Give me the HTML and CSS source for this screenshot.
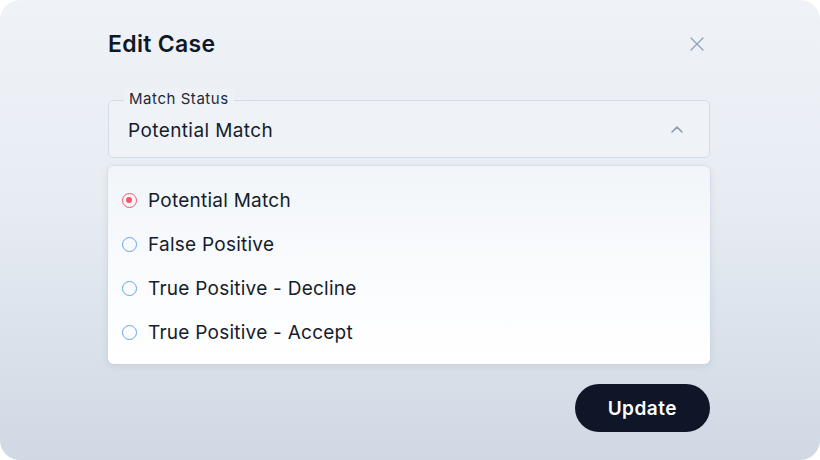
FILE: index.html
```html
<!DOCTYPE html>
<html lang="en">
<head>
<meta charset="utf-8">
<title>Edit Case</title>
<link rel="stylesheet" href="styles.css">
</head>
<body>
<div class="card">
  <div class="header">
    <h1 class="title">Edit Case</h1>
    <svg class="close" width="14" height="14" viewBox="0 0 14 14" fill="none" stroke="#94a3b8" stroke-width="1.4" stroke-linecap="round"><path d="M1 1L13 13M13 1L1 13"/></svg>
  </div>
  <div class="field">
    <span class="label">Match Status</span>
    <span class="value">Potential Match</span>
    <svg class="chev" width="12" height="7" viewBox="0 0 12 7" fill="none" stroke="#8a9ab0" stroke-width="1.6" stroke-linecap="round" stroke-linejoin="round"><path d="M1 6L6 1.2L11 6"/></svg>
  </div>
  <ul class="menu">
    <li class="item"><span class="radio selected"></span>Potential Match</li>
    <li class="item"><span class="radio"></span>False Positive</li>
    <li class="item"><span class="radio"></span>True Positive - Decline</li>
    <li class="item"><span class="radio"></span>True Positive - Accept</li>
  </ul>
  <button class="btn">Update</button>
</div>
</body>
</html>
```
FILE: styles.css
```css
html, body {
  margin: 0;
  padding: 0;
  background: #ffffff;
}
body {
  font-family: Inter, "Noto Sans", sans-serif;
  color: #111827;
}
.card {
  width: 820px;
  height: 460px;
  box-sizing: border-box;
  border-radius: 20px;
  background: linear-gradient(180deg, #eff3f8 0%, #e7ecf3 45%, #cfd8e3 100%);
  padding: 28px 110px 0 108px;
  display: flex;
  flex-direction: column;
}
.header {
  height: 32px;
  display: flex;
  align-items: center;
  justify-content: space-between;
}
.title {
  margin: 0;
  font-size: 23px;
  line-height: 32px;
  font-weight: 600;
  color: #101828;
  letter-spacing: 0.3px;
}
.close {
  margin-right: 6px;
  display: block;
}
.field {
  margin-top: 40px;
  position: relative;
  height: 58px;
  box-sizing: border-box;
  border: 1px solid #d3dbe6;
  border-radius: 5px;
  background: #eff3f8;
  display: flex;
  align-items: center;
  justify-content: space-between;
  padding: 0 26px 0 19px;
}
.label {
  position: absolute;
  top: -12px;
  left: 15px;
  padding: 0 5px;
  font-size: 15px;
  line-height: 20px;
  letter-spacing: 0.55px;
  color: #1f2937;
  background: linear-gradient(180deg, #eef2f7 0%, #eef2f7 50%, #eff3f8 50%);
}
.value {
  font-size: 19px;
  line-height: 24px;
  letter-spacing: 0.4px;
  color: #151c2b;
  padding-top: 3px;
}
.chev {
  display: block;
}
.menu {
  list-style: none;
  margin: 8px 0 0;
  padding: 12px 0 10px 14px;
  height: 198px;
  box-sizing: border-box;
  border-radius: 6px;
  background: linear-gradient(180deg, #f1f5f9 0%, #fbfcfe 60%, #ffffff 100%);
  box-shadow: 0 2px 10px rgba(30, 41, 59, 0.08), 0 0 0 1px rgba(203, 213, 225, 0.35);
}
.item {
  height: 44px;
  display: flex;
  align-items: center;
  gap: 11px;
  font-size: 19px;
  letter-spacing: 0.25px;
  color: #151c2b;
}
.radio {
  width: 15px;
  height: 15px;
  box-sizing: border-box;
  border-radius: 50%;
  border: 1.5px solid #60a5fa;
  flex: none;
  position: relative;
}
.radio.selected {
  border-color: #f4566c;
}
.radio.selected::after {
  content: "";
  position: absolute;
  left: 3px;
  top: 3px;
  width: 6px;
  height: 6px;
  border-radius: 50%;
  background: #f4566c;
}
.btn {
  align-self: flex-end;
  margin-top: 20px;
  height: 48px;
  padding: 0 33px;
  border: none;
  border-radius: 24px;
  background: #0e1628;
  color: #ffffff;
  font-family: Inter, "Noto Sans", sans-serif;
  font-size: 19px;
  font-weight: 600;
  letter-spacing: 0.5px;
}
```
